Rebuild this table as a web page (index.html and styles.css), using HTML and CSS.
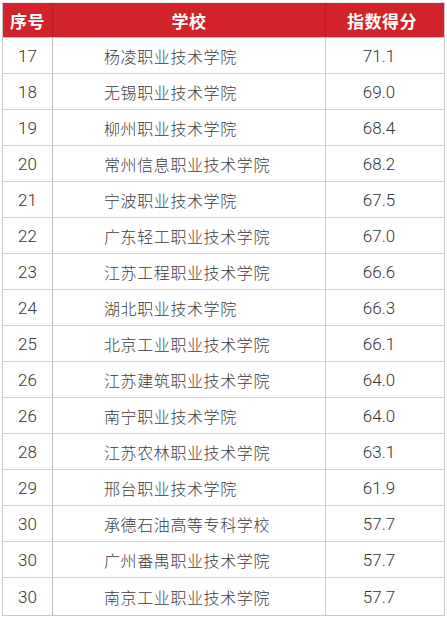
FILE: index.html
```html
<!DOCTYPE html>
<html lang="zh">
<head>
<meta charset="utf-8">
<link rel="stylesheet" href="styles.css">
</head>
<body>
<div class="table">
  <div class="row head">
    <div class="c1">序号</div>
    <div class="c2">学校</div>
    <div class="c3">指数得分</div>
  </div>
  <div class="row"><div class="c1">17</div><div class="c2">杨凌职业技术学院</div><div class="c3">71.1</div></div>
  <div class="row"><div class="c1">18</div><div class="c2">无锡职业技术学院</div><div class="c3">69.0</div></div>
  <div class="row"><div class="c1">19</div><div class="c2">柳州职业技术学院</div><div class="c3">68.4</div></div>
  <div class="row"><div class="c1">20</div><div class="c2">常州信息职业技术学院</div><div class="c3">68.2</div></div>
  <div class="row"><div class="c1">21</div><div class="c2">宁波职业技术学院</div><div class="c3">67.5</div></div>
  <div class="row"><div class="c1">22</div><div class="c2">广东轻工职业技术学院</div><div class="c3">67.0</div></div>
  <div class="row"><div class="c1">23</div><div class="c2">江苏工程职业技术学院</div><div class="c3">66.6</div></div>
  <div class="row"><div class="c1">24</div><div class="c2">湖北职业技术学院</div><div class="c3">66.3</div></div>
  <div class="row"><div class="c1">25</div><div class="c2">北京工业职业技术学院</div><div class="c3">66.1</div></div>
  <div class="row"><div class="c1">26</div><div class="c2">江苏建筑职业技术学院</div><div class="c3">64.0</div></div>
  <div class="row"><div class="c1">26</div><div class="c2">南宁职业技术学院</div><div class="c3">64.0</div></div>
  <div class="row"><div class="c1">28</div><div class="c2">江苏农林职业技术学院</div><div class="c3">63.1</div></div>
  <div class="row"><div class="c1">29</div><div class="c2">邢台职业技术学院</div><div class="c3">61.9</div></div>
  <div class="row"><div class="c1">30</div><div class="c2">承德石油高等专科学校</div><div class="c3">57.7</div></div>
  <div class="row"><div class="c1">30</div><div class="c2">广州番禺职业技术学院</div><div class="c3">57.7</div></div>
  <div class="row"><div class="c1">30</div><div class="c2">南京工业职业技术学院</div><div class="c3">57.7</div></div>
</div>
</body>
</html>
```

FILE: styles.css
```css
html, body {
  margin: 0;
  padding: 0;
  background: #ffffff;
}
body {
  font-family: Roboto, "Noto Sans CJK SC", sans-serif;
  color: #3a3a3a;
}
.table {
  margin: 2px 0 0 2px;
  width: 443px;
  border: 1px solid #c9c9c9;
  border-top: 1px solid #e6e6e6;
  box-sizing: border-box;
}
.row {
  display: grid;
  grid-template-columns: 50px 273px 1fr;
  height: 36px;
  border-bottom: 1px solid #d0d0d0;
  box-sizing: border-box;
}
.row:last-child {
  border-bottom: none;
  height: 37px;
}
.row > div {
  display: flex;
  align-items: center;
  font-size: 17px;
  font-weight: 300;
  color: #333333;
}
.c1, .c3 {
  justify-content: center;
}
.c1 {
  border-right: 1px solid #bdbdbd;
}
.c2 {
  padding-left: 51px;
  border-right: 1px solid #d0d0d0;
}
.c3 {
  padding-right: 12px;
}
.row > .c2 {
  font-family: "Noto Sans CJK SC", sans-serif;
  font-size: 16px;
  font-weight: 300;
  letter-spacing: 0.6px;
  color: #3d3d3d;
}
.head {
  height: 35px;
  background: #d2222a;
  border-bottom: 1px solid #c8c8c8;
}
.head > div,
.head > .c2 {
  color: #ffffff;
  font-family: "Noto Sans CJK SC", sans-serif;
  font-weight: 700;
  font-size: 17px;
  letter-spacing: 0.5px;
}
.head .c1 {
  border-right: 1px solid #b51d24;
}
.head .c2 {
  justify-content: center;
  padding-left: 0;
  border-right: 1px solid #b51d24;
}
.head .c3 {
  padding-right: 6px;
}
```
